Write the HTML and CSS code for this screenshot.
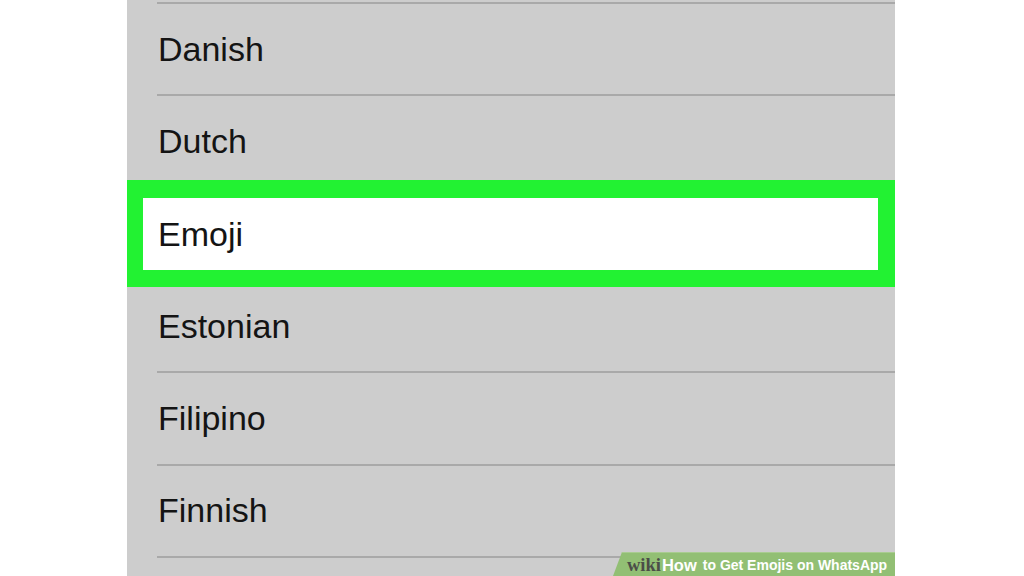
FILE: index.html
```html
<!DOCTYPE html>
<html>
<head>
<meta charset="utf-8">
<link rel="stylesheet" href="styles.css">
</head>
<body>
<div class="page">
  <div class="panel">
    <div class="top-line"></div>
    <div class="row">Danish</div>
    <div class="row">Dutch</div>
    <div class="row selected"><span class="sel-inner">Emoji</span></div>
    <div class="row">Estonian</div>
    <div class="row">Filipino</div>
    <div class="row">Finnish</div>
    <div class="row"></div>
    <div class="watermark"><span class="wm-wiki">wiki</span><span class="wm-how">How</span><span class="wm-rest">to Get Emojis on WhatsApp</span></div>
  </div>
</div>
</body>
</html>
```
FILE: styles.css
```css
html, body {
  margin: 0;
  padding: 0;
  background: #ffffff;
}
.page {
  width: 1024px;
  height: 576px;
  overflow: hidden;
  display: flex;
}
.panel {
  position: relative;
  margin-left: 127px;
  width: 768px;
  height: 576px;
  background: #cdcdcd;
  overflow: hidden;
  font-family: "Liberation Sans", Arial, sans-serif;
  color: #141414;
}
.top-line {
  height: 2px;
  margin-left: 30px;
  border-bottom: 2px solid #a9a9a9;
}
.row {
  box-sizing: border-box;
  height: 92.3px;
  margin-left: 30px;
  border-bottom: 2px solid #a9a9a9;
  display: flex;
  align-items: center;
  padding-left: 1px;
  font-size: 34px;
}
.row.selected {
  height: 107px;
  margin: -8.6px 0 -6.1px 0;
  border: 17px solid #22f232;
  border-top-width: 18px;
  border-left-width: 16px;
  background: #ffffff;
  padding-left: 15px;
}
.watermark {
  position: absolute;
  right: 0;
  bottom: 0;
  width: 282px;
  height: 24px;
  background: #92bf74;
  border-top: 1px solid #a9cc90;
  clip-path: polygon(9px 0, 100% 0, 100% 100%, 0 100%);
  display: flex;
  align-items: center;
  padding-left: 14px;
  padding-top: 1px;
  box-sizing: border-box;
  white-space: nowrap;
}
.wm-wiki {
  font-family: "Liberation Serif", "Times New Roman", serif;
  font-weight: bold;
  color: #4b4d48;
  font-size: 18.5px;
}
.wm-how {
  font-family: "Liberation Sans", Arial, sans-serif;
  font-weight: bold;
  color: #ffffff;
  font-size: 16.5px;
  margin-left: 1px;
}
.wm-rest {
  font-family: "Liberation Sans", Arial, sans-serif;
  color: #ffffff;
  font-weight: bold;
  font-size: 14px;
  margin-left: 6px;
}
```
